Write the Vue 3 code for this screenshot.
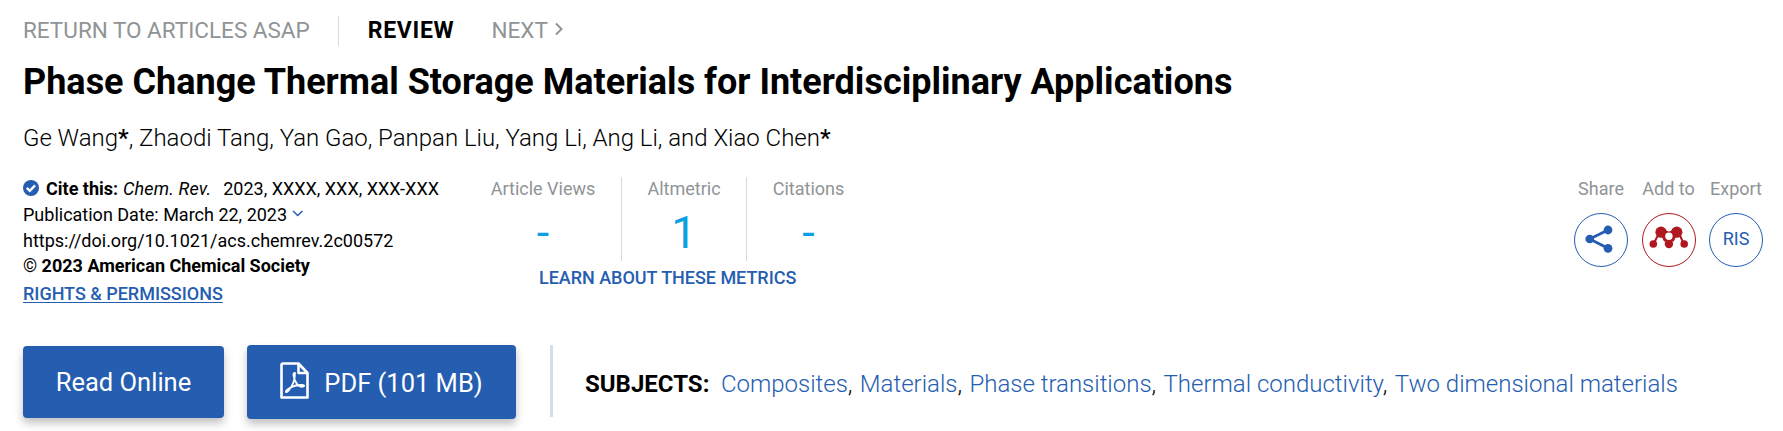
<script setup>
const subjects = ['Composites', 'Materials', 'Phase transitions', 'Thermal conductivity', 'Two dimensional materials']
const metrics = [
  { label: 'Article Views', value: '-', cls: 'views' },
  { label: 'Altmetric', value: '1', cls: 'alt' },
  { label: 'Citations', value: '-', cls: 'cites' }
]
</script>

<template>
  <main class="page">
    <nav class="crumbs">
      <a class="back">RETURN TO ARTICLES ASAP</a>
      <span class="rule"></span>
      <strong class="kind">REVIEW</strong>
      <a class="next">NEXT</a>
      <svg class="chev" width="8" height="14" viewBox="0 0 8 14"><path d="M1 1.500l5.500 5.500L1 12.500" /></svg>
    </nav>
    <h1 class="title"><span>Phase Change Thermal Storage Materials for Interdisciplinary Applications</span></h1>
    <p class="authors"><span>Ge Wang<b>*</b>, Zhaodi Tang, Yan Gao, Panpan Liu, Yang Li, Ang Li, and Xiao Chen<b>*</b></span></p>

    <section class="info">
      <div class="meta">
        <div class="line cite">
          <svg class="check" width="16" height="16" viewBox="0 0 16 16"><circle cx="8" cy="8" r="8" /><path d="M3.8 7.8l3 3 5.3-5.4" /></svg>
          <b>Cite this:</b><i>Chem. Rev.</i><span>2023, XXXX, XXX, XXX-XXX</span>
        </div>
        <div class="line"><span>Publication Date: March 22, 2023</span>
          <svg class="down" width="12" height="8" viewBox="0 0 12 8"><path d="M1 1l4.7 4.5L10.4 1" /></svg>
        </div>
        <div class="line"><span>https://doi.org/10.1021/acs.chemrev.2c00572</span></div>
        <div class="line copy"><span>© <b>2023 American Chemical Society</b></span></div>
        <div class="line rights"><a>RIGHTS &amp; PERMISSIONS</a></div>
      </div>

      <div class="metrics">
        <div class="cols">
          <div v-for="m in metrics" :key="m.label" class="metric" :class="m.cls">
            <span class="label">{{ m.label }}</span>
            <span class="value">{{ m.value }}</span>
          </div>
        </div>
        <a class="learn"><span>LEARN ABOUT THESE METRICS</span></a>
      </div>

      <div class="actions">
        <div class="action">
          <span class="label">Share</span>
          <span class="ring">
            <svg width="52" height="52" viewBox="1 1 52 52"><path d="M34 17L15.7 26L34 35.3" fill="none" stroke="#255db0" stroke-width="2.8" /><g fill="#255db0"><circle cx="15.7" cy="26" r="4.3" /><circle cx="34" cy="17" r="4.4" /><circle cx="34" cy="35.3" r="4.4" /></g></svg>
          </span>
        </div>
        <div class="action red">
          <span class="label">Add to</span>
          <span class="ring">
            <svg width="52" height="52" viewBox="1 1 52 52"><path d="M16.500 21L11.600 31M37.300 21l4.600 10M20.500 22l6.400 9 6.400-9" fill="none" stroke="#b01820" stroke-width="2" /><g fill="#b01820"><path d="M19 14.500l4 1.500q3.900 5 7.800 0l4-1.500v7.500l-3 6.500h-9.800l-3-6.500z" /><circle cx="19" cy="19.200" r="5.600" /><circle cx="34.8" cy="19.200" r="5.600" /><circle cx="11.3" cy="31" r="3.8" /><circle cx="26.9" cy="31" r="4.200" /><circle cx="42.2" cy="31" r="3.8" /></g><circle cx="26.9" cy="23.3" r="3.7" fill="#fff" /></svg>
          </span>
        </div>
        <div class="action">
          <span class="label">Export</span>
          <span class="ring ris">RIS</span>
        </div>
      </div>
    </section>

    <section class="bottom">
      <button class="btn read"><span>Read Online</span></button>
      <button class="btn pdf">
        <svg width="31" height="37" viewBox="0 0 31 37"><path d="M3.500 1.500h16l9 9.500v24.500h-26v-33z M19.500 1.500v9.500h9" /><path class="thin" d="M15.500 11c-2 0-.5 5 .7 8 2 4 5 6.500 8.300 5.500 2-1-1-2-4-1.500-5 .5-9 2-12.500 5-2 2-1 3 1 1 4-4 7-11 7-18z" /></svg>
        <span>PDF (101 MB)</span>
      </button>
      <div class="subjects">
        <strong>SUBJECTS:</strong>
        <span class="list"><span v-for="(s, i) in subjects" :key="s" class="subject"><a>{{ s }}</a><template v-if="i < subjects.length - 1">,&nbsp;</template></span></span>
      </div>
    </section>
  </main>
</template>

<style>
body { margin: 0; background: #fff; }
</style>

<style scoped>
.page { box-sizing: border-box; width: 1783px; height: 431px; overflow: hidden; padding: 15px 20px 0 23px; font-family: Roboto, "Liberation Sans", sans-serif; color: #000; white-space: nowrap; }
b, strong { font-weight: 700; }
.crumbs { display: flex; align-items: center; height: 30px; font-size: 22.5px; color: #8f9496; }
.rule { width: 1px; height: 30px; margin: 2px 29px 0 28px; background: #d3dcdf; }
.kind { color: #000; margin-right: 37px; font-size: 23px; letter-spacing: .7px; }
.chev { margin: -2px 0 0 7px; fill: none; stroke: #8f9496; stroke-width: 2; }
.title { margin: 16px 0 0; font-size: 36px; line-height: 43px; font-weight: 700; }
.authors { margin: 19px 0 0; font-size: 24px; line-height: 30px; font-weight: 300; letter-spacing: -.02px; }
.authors b { font-weight: 500; }
.info { display: flex; margin-top: 22px; height: 170px; font-size: 18px; }
.meta { width: 468px; }
.line { display: flex; align-items: center; height: 26px; }
.check { margin: -1px 7px 0 0; fill: #255db0; }
.check path { fill: none; stroke: #fff; stroke-width: 2.4; }
.cite i { margin: 0 12px 0 5px; letter-spacing: .15px; }
.down { margin: 0 0 0 5px; fill: none; stroke: #255db0; stroke-width: 1.5; }
.copy { height: 25px; }
.rights { margin-top: 2px; }
.rights a { color: #255db0; font-weight: 500; letter-spacing: -.02px; text-decoration: underline; text-underline-offset: 2px; }
.metrics { width: 400px; }
.cols { display: flex; height: 84px; margin-top: 2px; }
.metric { box-sizing: border-box; display: flex; flex: none; flex-direction: column; align-items: center; }
.views { width: 131px; padding-right: 26px; border-right: 1px solid #d3dcdf; }
.alt { width: 125px; border-right: 1px solid #d3dcdf; }
.cites { width: 123px; }
.label { line-height: 24px; color: #8f9496; }
.value { font-size: 45px; line-height: 64px; color: #0c9fe4; }
.learn { display: block; margin: 5px 0 0 48px; line-height: 24px; font-weight: 500; letter-spacing: -.03px; color: #255db0; }
.actions { display: flex; gap: 13.5px; margin-left: auto; margin-top: 2px; }
.action { display: flex; flex-direction: column; align-items: center; width: 54px; }
.ring { box-sizing: border-box; display: flex; align-items: center; justify-content: center; width: 54px; height: 54px; margin-top: 12px; border: 1px solid #255db0; border-radius: 50%; color: #255db0; }
.ris { padding-bottom: 3px; }
.red .ring { border-color: #b01820; }
.bottom { display: flex; align-items: flex-start; }
.btn { box-sizing: border-box; display: flex; align-items: center; justify-content: center; border: 0; border-radius: 4px; padding: 0; background: #255db0; color: #fff; font: 25.5px Roboto, sans-serif; box-shadow: 0 5px 9px rgba(0,0,0,.25); }
.read { width: 201px; height: 72px; margin-top: 1px; }
.pdf { width: 269px; height: 74px; margin-left: 23px; padding-right: 1px; gap: 14px; }
.pdf svg { margin-top: -4px; fill: none; stroke: #fff; stroke-width: 2.6; stroke-linejoin: round; }
.pdf span { margin-top: 1px; }
.pdf .thin { stroke-width: 1.8; }
.subjects { box-sizing: border-box; display: flex; align-items: center; height: 72px; margin-left: 34px; padding: 6px 0 0 32px; border-left: 3px solid #d3dfe4; font-size: 24px; }
.list { display: flex; gap: 1.5px; margin-left: 11.5px; font-weight: 300; }
.list a { color: #255db0; }
</style>
